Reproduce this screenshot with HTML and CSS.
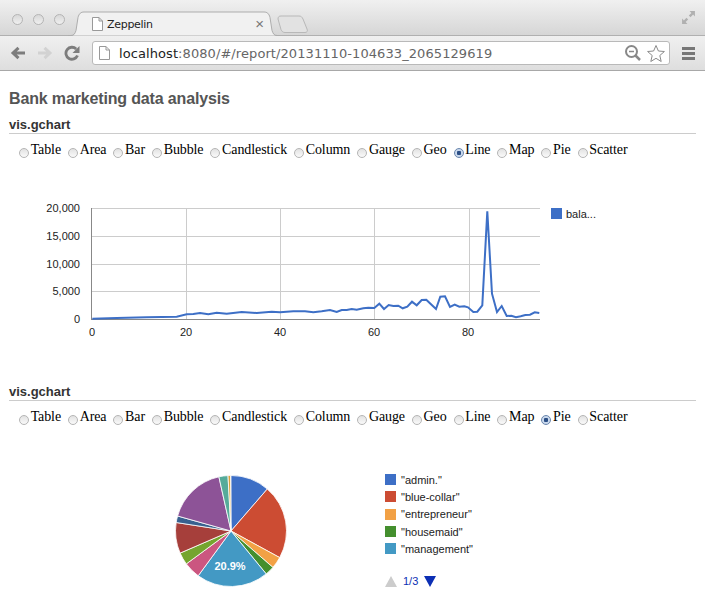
FILE: index.html
```html
<!DOCTYPE html>
<html lang="en">

<head>
    <meta charset="UTF-8">
    <title>Zeppelin</title>
    <link rel="stylesheet" href="styles.css">
</head>

<body>

    <div class="browser">
        <div class="titlebar">
            <div class="lights">
                <span class="light"></span>
                <span class="light"></span>
                <span class="light"></span>
            </div>
            <svg class="tabshape" width="245" height="25" viewBox="0 0 245 25">
                <path d="M210 8c0-2 1-3 3-3h18c2 0 3 1 4 3l4 10c1 2 0 3.500-2 3.500h-20c-2 0-3-1-4-3z" fill="#e2e2e2" stroke="#b8b8b8"/>
                <path d="M0 24.500h3c3 0 4-2 5-5l2-13c1-4 3-5.500 6-5.500h180c3 0 5 1.500 6 5.500l2 13c1 3 2 5 5 5h3" fill="#f1f1f1" stroke="#adadad"/>
            </svg>
            <div class="tab">
                <svg class="pageicon" width="11" height="14" viewBox="0 0 11 14">
                    <path d="M.5.500h6.500l3.500 3.500v9.500h-10zM7 .5v3.500h3.500" fill="#fff" stroke="#999"/>
                </svg>
                <span class="tabtitle">Zeppelin</span>
                <span class="tabclose">×</span>
            </div>
            <svg class="fullscreen" width="15" height="15" viewBox="0 0 14 14">
                <path d="M8 1h5v5l-1.700-1.700-2.400 2.400-1.600-1.600 2.400-2.400zM6 13H1V8l1.700 1.700 2.400-2.400 1.600 1.600-2.400 2.400z" fill="#b0b0b0"/>
            </svg>
        </div>
        <div class="toolbar">
            <svg class="navicon" width="16" height="14" viewBox="0 0 16 14">
                <path d="M15 7H4M8.500 1.800L3 7l5.500 5.200" fill="none" stroke="#7d7d7d" stroke-width="3"/>
            </svg>
            <svg class="navicon" width="16" height="14" viewBox="0 0 16 14">
                <path d="M1 7h11M7.500 1.800L13 7l-5.500 5.200" fill="none" stroke="#d2d2d2" stroke-width="3"/>
            </svg>
            <svg class="navicon" width="16" height="16" viewBox="0 0 16 16">
                <path d="M13.500 10.500A6 6 0 1 1 12.200 4" fill="none" stroke="#7d7d7d" stroke-width="2.800"/>
                <path d="M15.500 1v7h-7z" fill="#7d7d7d"/>
            </svg>
            <div class="address">
                <svg class="pageicon" width="11" height="14" viewBox="0 0 11 14">
                    <path d="M.5.500h6.500l3.500 3.500v9.500h-10zM7 .5v3.500h3.500" fill="#fff" stroke="#999"/>
                </svg>
                <span class="url"><span class="host">localhost</span>:8080/#/report/20131110-104633_2065129619</span>
                <svg class="zoomicon" width="16" height="16" viewBox="0 0 16 16">
                    <circle cx="6.500" cy="6.500" r="5.500" fill="none" stroke="#888" stroke-width="2"/>
                    <path d="M4 6.500h5" stroke="#888" stroke-width="1.500"/>
                    <path d="M10.500 10.500l4.500 4.500" stroke="#888" stroke-width="2.500"/>
                </svg>
                <svg class="star" width="18" height="19" viewBox="0 0 18 18">
                    <path d="M9 1l2.400 5.500 6 .5-4.600 4 1.400 6L9 13.800 3.800 17l1.400-6L.6 7l6-.5z" fill="#fff" stroke="#8a8a8a"/>
                </svg>
            </div>
            <div class="menuicon">
                <span></span>
                <span></span>
                <span></span>
            </div>
        </div>
    </div>

    <div class="page">
        <h1 class="title">Bank marketing data analysis</h1>

        <div class="paragraph">
            <h2 class="paragraph-name">vis.gchart</h2>
            <form class="charttypes">
                <label><input type="radio" name="t1">Table</label>
                <label><input type="radio" name="t1">Area</label>
                <label><input type="radio" name="t1">Bar</label>
                <label><input type="radio" name="t1">Bubble</label>
                <label><input type="radio" name="t1">Candlestick</label>
                <label><input type="radio" name="t1">Column</label>
                <label><input type="radio" name="t1">Gauge</label>
                <label><input type="radio" name="t1">Geo</label>
                <label><input type="radio" name="t1" checked>Line</label>
                <label><input type="radio" name="t1">Map</label>
                <label><input type="radio" name="t1">Pie</label>
                <label><input type="radio" name="t1">Scatter</label>
            </form>
            <svg class="linechart" width="600" height="200" viewBox="9 170 600 200">
                <g stroke="#ccc">
                    <path d="M92 208.500H540M92 236.500H540M92 264.500H540M92 291.500H540"/>
                    <path d="M186.500 208V319M280.500 208V319M374.500 208V319M469.500 208V319"/>
                </g>
                <path d="M92 319.500H540M91.500 208V320" stroke="#888"/>
                <polyline class="dataline" points="92.300,318.700 116.700,318 146.700,317.300 176.700,316.700 186.700,314.300 193.300,314 200,313 208.300,314.300 216.700,312.700 226.700,313.700 241.700,312 256.700,313 271.700,311.700 280,312.300 293.300,311.300 305,311.300 313.300,312.300 321.700,311.300 330,310 336.700,312 341.700,310 346.700,310 351.700,309 356.700,309.700 363.300,308.300 368.300,307.700 374.300,308 379.300,303.700 384,309 388.700,305 393.300,306 398.300,305.700 402.700,308.300 407.300,306.700 412,301.700 416.700,305.300 421.700,300 426.300,299.700 431,304.300 436,309 440.300,296.700 445,296.300 450,307 454.700,304.700 459.300,306.700 464.300,306.300 468,307.300 473.300,312 477.300,311.700 482.300,305.300 487.300,211.300 492,293.700 497,312 501.700,306 506.700,316 511.300,315.700 516,317.300 520.700,316.300 525.300,315 530,314.700 534.700,312.300 539.300,313"/>
                <g class="axis" text-anchor="end">
                    <text x="80" y="212">20,000</text>
                    <text x="80" y="240">15,000</text>
                    <text x="80" y="268">10,000</text>
                    <text x="80" y="295">5,000</text>
                    <text x="80" y="323">0</text>
                </g>
                <g class="axis" text-anchor="middle">
                    <text x="92" y="336">0</text>
                    <text x="186" y="336">20</text>
                    <text x="280" y="336">40</text>
                    <text x="374" y="336">60</text>
                    <text x="468" y="336">80</text>
                </g>
                <rect x="551" y="208" width="11" height="11" fill="#3d6fc6"/>
                <text class="axis" x="566" y="218">bala...</text>
            </svg>
        </div>

        <div class="paragraph">
            <h2 class="paragraph-name">vis.gchart</h2>
            <form class="charttypes">
                <label><input type="radio" name="t2">Table</label>
                <label><input type="radio" name="t2">Area</label>
                <label><input type="radio" name="t2">Bar</label>
                <label><input type="radio" name="t2">Bubble</label>
                <label><input type="radio" name="t2">Candlestick</label>
                <label><input type="radio" name="t2">Column</label>
                <label><input type="radio" name="t2">Gauge</label>
                <label><input type="radio" name="t2">Geo</label>
                <label><input type="radio" name="t2">Line</label>
                <label><input type="radio" name="t2">Map</label>
                <label><input type="radio" name="t2" checked>Pie</label>
                <label><input type="radio" name="t2">Scatter</label>
            </form>
            <div class="piechart">
                <svg class="pie" width="114" height="114" viewBox="-57 -57 114 114">
                    <g stroke="#fff" stroke-width=".8">
                        <path d="M0 0V-55.500A55.500 55.500 0 0 1 36.300-42z" fill="#3d6fc6"/>
                        <path d="M0 0L36.300-42A55.500 55.500 0 0 1 48.700 26.600z" fill="#cc4c33"/>
                        <path d="M0 0L48.700 26.600A55.500 55.500 0 0 1 41.900 36.400z" fill="#f2a145"/>
                        <path d="M0 0L41.900 36.400A55.500 55.500 0 0 1 35.200 42.900z" fill="#448f2e"/>
                        <path d="M0 0L35.200 42.900A55.500 55.500 0 0 1-32.800 44.800z" fill="#4399c4"/>
                        <path d="M0 0L-32.800 44.800A55.500 55.500 0 0 1-44.700 32.900z" fill="#cb5680"/>
                        <path d="M0 0L-44.700 32.900A55.500 55.500 0 0 1-50.900 22.100z" fill="#75a52e"/>
                        <path d="M0 0L-50.900 22.100A55.500 55.500 0 0 1-54.800-8.500z" fill="#a63f3b"/>
                        <path d="M0 0L-54.800-8.500A55.500 55.500 0 0 1-53.400-15z" fill="#38618f"/>
                        <path d="M0 0L-53.400-15A55.500 55.500 0 0 1-12.100-54.200z" fill="#8d5397"/>
                        <path d="M0 0L-12.100-54.200A55.500 55.500 0 0 1-3-55.400z" fill="#55ab9a"/>
                        <path d="M0 0L-3-55.400A55.500 55.500 0 0 1-.5-55.500z" fill="#d9a13b"/>
                    </g>
                    <text class="pielabel" x="-1" y="39" text-anchor="middle">20.9%</text>
                </svg>
                <div class="legend">
                    <div class="legend-item"><span class="swatch blue"></span>"admin."</div>
                    <div class="legend-item"><span class="swatch red"></span>"blue-collar"</div>
                    <div class="legend-item"><span class="swatch orange"></span>"entrepreneur"</div>
                    <div class="legend-item"><span class="swatch green"></span>"housemaid"</div>
                    <div class="legend-item"><span class="swatch teal"></span>"management"</div>
                    <div class="pager">
                        <svg width="12" height="11" viewBox="0 0 12 11"><path d="M6 0l6 11H0z" fill="#ccc"/></svg>
                        <span class="pagenum">1/3</span>
                        <svg width="12" height="11" viewBox="0 0 12 11"><path d="M6 11L0 0h12z" fill="#0c2fb4"/></svg>
                    </div>
                </div>
            </div>
        </div>
    </div>

</body>

</html>
```

FILE: styles.css
```css
html,
body {
    height: 100%;
}

body {
    margin: 0;
    overflow: hidden;
    background: #fff;
    font-family: 'Liberation Sans', Arial, sans-serif;
}

/* browser chrome */
.browser {
    height: 71px;
    box-sizing: border-box;
    border-bottom: 1px solid #a8a8a8;
}

.titlebar {
    position: relative;
    height: 36px;
    box-sizing: border-box;
    border-bottom: 1px solid #b0b0b0;
    background: linear-gradient(#f0f0f0, #d6d6d6);
}

.lights {
    display: flex;
    gap: 10px;
    padding: 14px 0 0 12px;
}

.light {
    width: 9px;
    height: 9px;
    border: 1px solid #b4b4b4;
    border-radius: 50%;
    background: linear-gradient(#d8d8d8, #efefef);
}

.tabshape {
    position: absolute;
    left: 68px;
    top: 11px;
}

.tab {
    position: absolute;
    left: 92px;
    top: 17px;
    width: 180px;
    display: flex;
    align-items: center;
}

.tabtitle {
    margin-left: 4px;
    font-family: 'DejaVu Sans', sans-serif;
    font-size: 11px;
    letter-spacing: -.3px;
    color: #222;
}

.tabclose {
    margin-left: auto;
    margin-right: 8px;
    font-size: 15px;
    line-height: 14px;
    color: #777;
}

.fullscreen {
    position: absolute;
    left: 681px;
    top: 10px;
}

.toolbar {
    height: 34px;
    display: flex;
    align-items: center;
    padding: 0 10px;
    background: linear-gradient(#f0f0f0, #dedede);
}

.navicon {
    flex: none;
    margin-right: 11px;
}

.address {
    flex: none;
    width: 578px;
    height: 24px;
    box-sizing: border-box;
    margin-left: 1px;
    padding: 0 4px 0 6px;
    display: flex;
    align-items: center;
    background: #fff;
    border: 1px solid #b9b9b9;
    border-radius: 3px;
}

.url {
    margin-left: 9px;
    font-family: 'DejaVu Sans', sans-serif;
    font-size: 13px;
    letter-spacing: .08px;
    color: #666;
    white-space: nowrap;
}

.host {
    color: #222;
}

.zoomicon {
    margin-left: auto;
    margin-right: 6px;
}

.menuicon {
    display: flex;
    flex-direction: column;
    gap: 2px;
    margin-left: 12px;
}

.menuicon span {
    display: block;
    width: 13px;
    height: 3px;
    background: #777;
}

/* page */
.page {
    padding: 19px 9px 0;
}

.title {
    margin: 0;
    font-size: 16px;
    line-height: 18px;
    letter-spacing: -.15px;
    color: #555;
}

.paragraph {
    margin-top: 10px;
}

.paragraph + .paragraph {
    margin-top: 15px;
}

.paragraph-name {
    margin: 0;
    padding-bottom: 1px;
    border-bottom: 1px solid #ccc;
    font-size: 13px;
    line-height: 14px;
    color: #333;
}

.charttypes {
    display: flex;
    padding: 8px 0 0 3px;
    font-family: 'Liberation Serif', 'Times New Roman', serif;
    font-size: 14px;
    line-height: 16px;
    letter-spacing: -.1px;
    color: #000;
}

.charttypes input {
    appearance: none;
    width: 10px;
    height: 10px;
    box-sizing: border-box;
    margin: 6px 1.640px 0 7px;
    vertical-align: top;
    border: 1px solid #b5b5b5;
    border-radius: 50%;
    background: linear-gradient(#e2e2e2, #fafafa);
}

.charttypes input:checked {
    border-color: #6a86ad;
    background: radial-gradient(circle, #2c4f86 0 2px, #c9d8ec 2.500px);
}

.linechart {
    display: block;
    margin-top: 12px;
}

.axis {
    font-family: 'Liberation Sans', Arial, sans-serif;
    font-size: 11px;
    fill: #222;
}

.dataline {
    fill: none;
    stroke: #3d6fc6;
    stroke-width: 2;
}

.piechart {
    display: flex;
    padding: 45px 0 0 165px;
}

.pie {
    flex: none;
    margin-top: 4px;
}

.pielabel {
    font-family: 'Liberation Sans', Arial, sans-serif;
    font-size: 11px;
    font-weight: bold;
    fill: #fff;
}

.legend {
    margin: 1px 0 0 97px;
    font-size: 11px;
    color: #222;
}

.legend-item {
    display: flex;
    align-items: center;
    height: 17.300px;
}

.swatch {
    width: 11px;
    height: 11px;
    margin-right: 5px;
}

.blue {
    background: #3d6fc6;
}

.red {
    background: #cc4c33;
}

.orange {
    background: #f2a145;
}

.green {
    background: #448f2e;
}

.teal {
    background: #4399c4;
}

.pager {
    display: flex;
    align-items: center;
    gap: 6px;
    margin-top: 18px;
}

.pagenum {
    color: #0c2fb4;
}
```
